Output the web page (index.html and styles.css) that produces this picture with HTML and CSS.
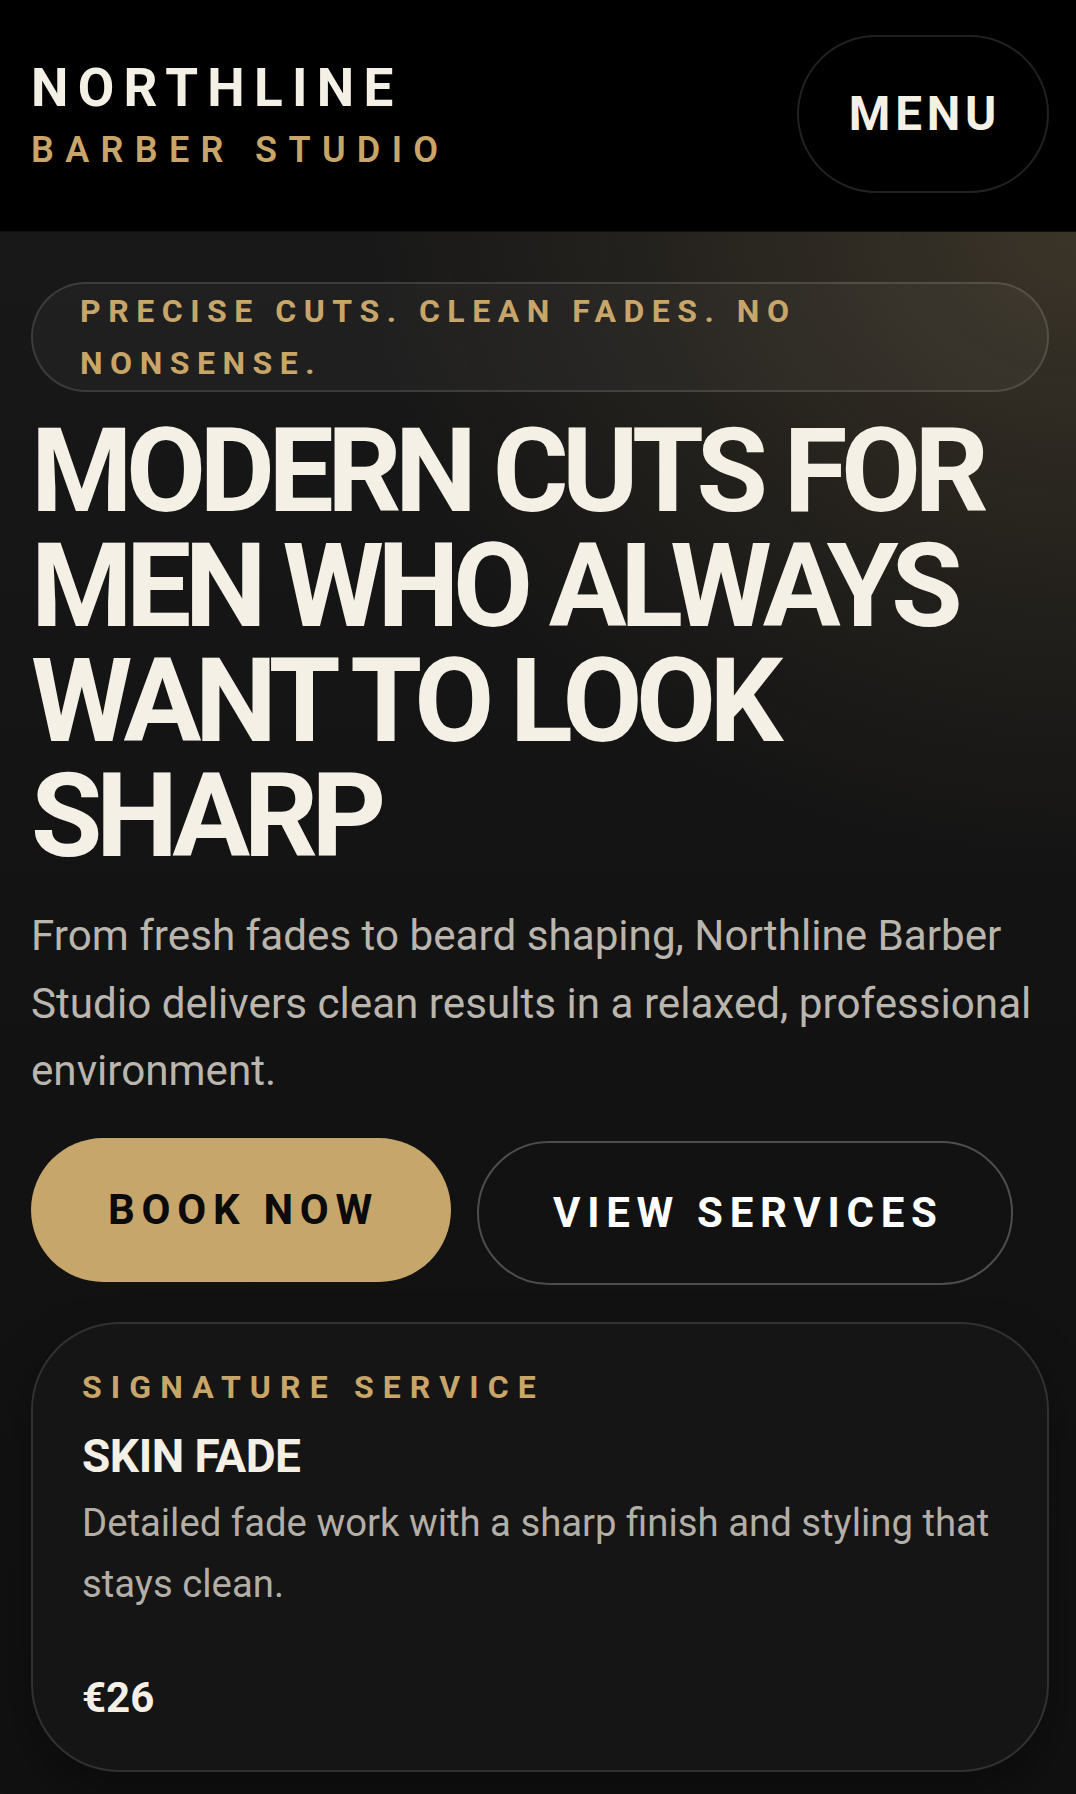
FILE: index.html
```html
<!DOCTYPE html>
<html lang="en">
<head>
<meta charset="utf-8">
<meta name="viewport" content="width=device-width, initial-scale=1">
<title>Northline Barber Studio</title>
<link rel="stylesheet" href="styles.css">
</head>
<body>
<header class="site-header">
  <a class="brand" href="#">
    <span class="brand-name">NORTHLINE</span>
    <span class="brand-sub">BARBER STUDIO</span>
  </a>
  <button class="menu-btn" type="button">MENU</button>
</header>
<main class="hero">
  <p class="badge">PRECISE CUTS. CLEAN FADES. NO NONSENSE.</p>
  <h1 class="hero-title">MODERN CUTS FOR MEN WHO ALWAYS WANT TO LOOK SHARP</h1>
  <p class="hero-text">From fresh fades to beard shaping, Northline Barber Studio delivers clean results in a relaxed, professional environment.</p>
  <div class="actions">
    <a class="btn btn-primary" href="#">BOOK NOW</a>
    <a class="btn btn-outline" href="#">VIEW SERVICES</a>
  </div>
  <article class="card">
    <p class="card-label">SIGNATURE SERVICE</p>
    <h2 class="card-title">SKIN FADE</h2>
    <p class="card-text">Detailed fade work with a sharp finish and styling that stays clean.</p>
    <p class="card-price">€26</p>
  </article>
</main>
</body>
</html>
```

FILE: styles.css
```css
* {
  box-sizing: border-box;
}

html, body {
  margin: 0;
  padding: 0;
}

body {
  background: #111111;
  font-family: Roboto, "Noto Sans", "Liberation Sans", sans-serif;
  color: #f5f0e6;
  min-height: 1794px;
}

.site-header {
  display: flex;
  align-items: center;
  justify-content: space-between;
  background: #000000;
  padding: 35px 27px 38px 31px;
  border-bottom: 1px solid rgba(255, 255, 255, 0.07);
}

.brand {
  display: flex;
  flex-direction: column;
  text-decoration: none;
}

.brand-name {
  font-size: 53px;
  font-weight: 700;
  letter-spacing: 0.175em;
  line-height: 58px;
  color: #f5f0e6;
}

.brand-sub {
  margin-top: 13px;
  font-size: 36px;
  font-weight: 600;
  letter-spacing: 0.315em;
  line-height: 40px;
  color: #c8a669;
}

.menu-btn {
  font-family: inherit;
  font-size: 47.5px;
  font-weight: 700;
  letter-spacing: 0.1em;
  line-height: 54px;
  color: #f5f0e6;
  background: transparent;
  border: 2px solid rgba(255, 255, 255, 0.13);
  border-radius: 999px;
  padding: 50px 46px 50px 50px;
}

.hero {
  padding: 50px 27px 21px 31px;
  background:
    radial-gradient(ellipse 950px 850px at 100% 0%, rgba(197, 164, 106, 0.2) 0%, rgba(197, 164, 106, 0.07) 45%, rgba(197, 164, 106, 0) 75%),
    linear-gradient(180deg, #181818 0%, #121212 55%, #111111 100%);
}

.badge {
  margin: 0;
  padding: 1px 47px;
  border: 2px solid rgba(255, 255, 255, 0.13);
  border-radius: 999px;
  background: rgba(255, 255, 255, 0.035);
  font-size: 32px;
  font-weight: 700;
  letter-spacing: 0.235em;
  line-height: 52px;
  color: #c8a669;
}

.hero-title {
  margin: 22px 0 0;
  font-size: 116px;
  font-weight: 700;
  letter-spacing: -0.056em;
  line-height: 115px;
  color: #f5f0e6;
}

.hero-text {
  margin: 28px 0 0;
  font-size: 42.2px;
  font-weight: 400;
  line-height: 67.5px;
  color: #bab5ad;
}

.actions {
  display: flex;
  align-items: center;
  gap: 26px;
  margin-top: 36px;
}

.btn {
  display: inline-block;
  font-size: 42px;
  font-weight: 700;
  letter-spacing: 0.16em;
  line-height: 44px;
  text-decoration: none;
  border-radius: 999px;
  white-space: nowrap;
}

.btn-primary {
  background: #c6a66b;
  color: #0b0b0b;
  padding: 50px 72px 50px 77px;
  transform: translateY(-3px);
}

.btn-outline {
  color: #ffffff;
  border: 2px solid rgba(255, 255, 255, 0.25);
  padding: 48px 67px 48px 74px;
}

.card {
  margin-top: 37px;
  background: #151515;
  border: 2px solid rgba(255, 255, 255, 0.12);
  border-radius: 88px;
  padding: 43px 48px 47px 49px;
  box-shadow: 0 24px 48px rgba(0, 0, 0, 0.35);
}

.card-label {
  margin: 0;
  font-size: 32px;
  font-weight: 700;
  letter-spacing: 0.285em;
  line-height: 41.6px;
  color: #c8a669;
}

.card-title {
  margin: 21px 0 0;
  font-size: 46px;
  font-weight: 700;
  letter-spacing: -0.01em;
  line-height: 54px;
  color: #f5f0e6;
}

.card-text {
  margin: 10px 0 0;
  font-size: 38.3px;
  font-weight: 400;
  line-height: 60.8px;
  color: #b3aea6;
}

.card-price {
  margin: 58px 0 0;
  font-size: 42px;
  font-weight: 700;
  line-height: 50.4px;
  color: #f5f0e6;
}
```
